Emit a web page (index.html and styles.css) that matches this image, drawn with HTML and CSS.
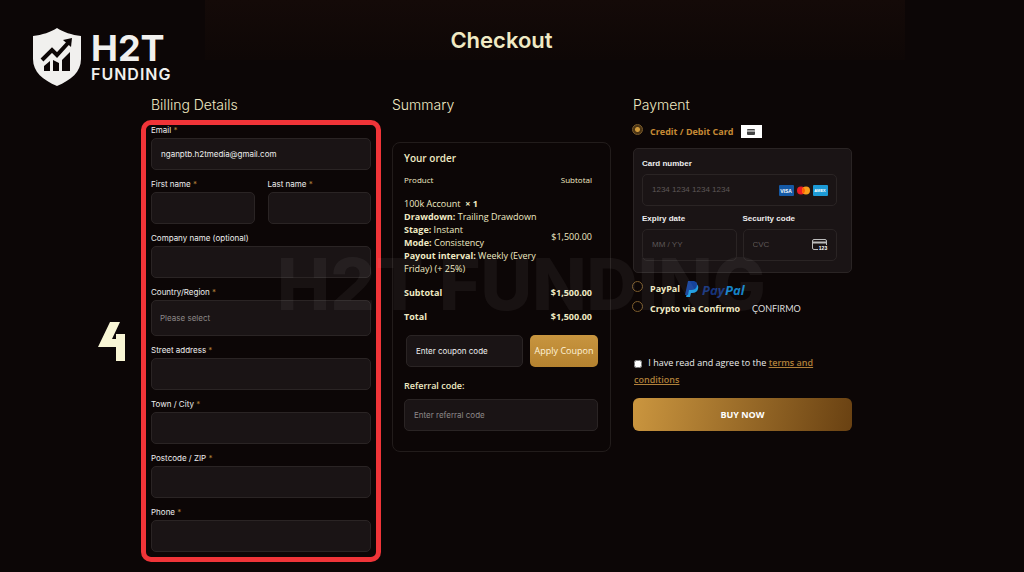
FILE: index.html
```html
<!DOCTYPE html>
<html lang="en">
<head>
    <meta charset="UTF-8">
    <meta name="viewport" content="width=device-width, initial-scale=1.0">
    <title>Checkout - H2T Funding</title>
    <link rel="stylesheet" href="styles.css">
</head>
<body>
    <header class="site-header">
        <a class="logo" href="#" aria-label="H2T Funding">
            <svg class="logo-shield" viewBox="0 0 48 58" aria-hidden="true">
                <path fill="#f1f0ee" d="M24 0 C18 4 9 7 0 8 V31 C0 44 10 52 24 58 C38 52 48 44 48 31 V8 C39 7 30 4 24 0z"/>
                <path fill="none" stroke="#0c0606" stroke-width="4" d="M9 32 L19 22 L24 27 L35 15"/>
                <path fill="#0c0606" d="M30 12 L39 10 L38 19z"/>
                <path fill="#0c0606" d="M11 38 L17 33 V43 H11z M20 32 L26 35 V43 H20z M29 32 L37 24 V43 H29z"/>
            </svg>
            <span class="logo-text">
                <span class="logo-name">H2T</span>
                <span class="logo-sub">FUNDING</span>
            </span>
        </a>
        <h1>Checkout</h1>
    </header>

    <form class="checkout">
        <section class="billing">
            <h2>Billing Details</h2>
            <span class="step">
                <svg viewBox="0 0 28 39" role="img" aria-label="Step 4"><path d="M12 0 H22 L14 17 H18 V12 H27 V39 H18 V25 H0z"/></svg>
            </span>
            <div class="fields">
                <div class="field">
                    <label for="email">Email <span class="required">*</span></label>
                    <input type="email" id="email" value="nganptb.h2tmedia@gmail.com">
                </div>
                <div class="field-row">
                    <div class="field">
                        <label for="first-name">First name <span class="required">*</span></label>
                        <input type="text" id="first-name">
                    </div>
                    <div class="field">
                        <label for="last-name">Last name <span class="required">*</span></label>
                        <input type="text" id="last-name">
                    </div>
                </div>
                <div class="field">
                    <label for="company">Company name (optional)</label>
                    <input type="text" id="company">
                </div>
                <div class="field">
                    <label for="country">Country/Region <span class="required">*</span></label>
                    <select id="country">
                        <option>Please select</option>
                    </select>
                </div>
                <div class="field">
                    <label for="street">Street address <span class="required">*</span></label>
                    <input type="text" id="street">
                </div>
                <div class="field">
                    <label for="city">Town / City <span class="required">*</span></label>
                    <input type="text" id="city">
                </div>
                <div class="field">
                    <label for="postcode">Postcode / ZIP <span class="required">*</span></label>
                    <input type="text" id="postcode">
                </div>
                <div class="field">
                    <label for="phone">Phone <span class="required">*</span></label>
                    <input type="tel" id="phone">
                </div>
            </div>
        </section>

        <section class="summary">
            <h2>Summary</h2>
            <div class="order-card">
                <h3>Your order</h3>
                <table class="order-table">
                    <thead>
                        <tr><th>Product</th><th>Subtotal</th></tr>
                    </thead>
                    <tbody>
                        <tr>
                            <td>
                                100k Account &nbsp;<b>× 1</b><br>
                                <b>Drawdown:</b> Trailing Drawdown<br>
                                <b>Stage:</b> Instant<br>
                                <b>Mode:</b> Consistency<br>
                                <b>Payout interval:</b> Weekly (Every Friday) (+ 25%)
                            </td>
                            <td>$1,500.00</td>
                        </tr>
                    </tbody>
                    <tfoot>
                        <tr><th>Subtotal</th><td>$1,500.00</td></tr>
                        <tr><th>Total</th><td>$1,500.00</td></tr>
                    </tfoot>
                </table>
                <div class="coupon">
                    <input type="text" placeholder="Enter coupon code" aria-label="Coupon code">
                    <button type="button">Apply Coupon</button>
                </div>
                <div class="referral">
                    <label for="referral">Referral code:</label>
                    <input type="text" id="referral" placeholder="Enter referral code">
                </div>
            </div>
        </section>

        <section class="payment">
            <h2>Payment</h2>
            <div class="method method-card">
                <input type="radio" name="method" id="pay-card" checked>
                <label for="pay-card">Credit / Debit Card</label>
                <span class="card-badge">
                    <svg viewBox="0 0 8 6" aria-hidden="true"><rect width="8" height="6" rx="1" fill="#444"/><path d="M0 2h8" stroke="#fff"/></svg>
                </span>
            </div>
            <div class="card-panel">
                <div class="card-field card-number">
                    <label for="card-number">Card number</label>
                    <div class="card-input">
                        <input type="text" id="card-number" placeholder="1234 1234 1234 1234">
                        <svg class="brands" viewBox="0 0 49 11" aria-hidden="true">
                            <rect width="15" height="11" rx="1" fill="#1559a5"/>
                            <text class="brand-name" x="7" y="8" font-size="5">VISA</text>
                            <rect x="17" width="15" height="11" rx="1" fill="#1c1618"/>
                            <circle cx="22" cy="5.5" r="4" fill="#eb1c26"/>
                            <circle cx="27" cy="5.5" r="4" fill="#f79e1b"/>
                            <path d="M24.5 2.400a4 4 0 0 1 0 6.200a4 4 0 0 1 0-6.200z" fill="#ff5f00"/>
                            <rect x="34" width="15" height="11" rx="1" fill="#1c9ad6"/>
                            <text class="brand-name" x="41" y="7" font-size="4">AMEX</text>
                        </svg>
                    </div>
                </div>
                <div class="card-field">
                    <label for="expiry">Expiry date</label>
                    <div class="card-input">
                        <input type="text" id="expiry" placeholder="MM / YY">
                    </div>
                </div>
                <div class="card-field">
                    <label for="cvc">Security code</label>
                    <div class="card-input">
                        <input type="text" id="cvc" placeholder="CVC">
                        <svg class="cvc-icon" viewBox="0 0 16 12" aria-hidden="true">
                            <path d="M6 10.500H2a1.500 1.500 0 0 1-1.500-1.500V2A1.500 1.500 0 0 1 2 .5h11A1.500 1.500 0 0 1 14.500 2v4" fill="none" stroke="#bdbdbd"/>
                            <path d="M0 3.500h15" stroke="#bdbdbd" stroke-width="2"/>
                            <text class="brand-name" x="11" y="11" font-size="5">123</text>
                        </svg>
                    </div>
                </div>
            </div>
            <div class="method">
                <input type="radio" name="method" id="pay-paypal">
                <label for="pay-paypal">PayPal</label>
                <svg class="paypal-logo" viewBox="0 0 62 18" role="img" aria-label="PayPal">
                    <path fill="#1a9be0" d="M5 4h6q3 1 2 5q-1 4-6 4h-1l-1 4H1z"/>
                    <path fill="#15429b" d="M3 1h6q4 1 3 5q-1 4-6 4H4l-1 5H0z"/>
                    <text class="paypal-pay" x="17" y="15">Pay</text>
                    <text class="paypal-pal" x="40" y="15">Pal</text>
                </svg>
            </div>
            <div class="method">
                <input type="radio" name="method" id="pay-crypto">
                <label for="pay-crypto">Crypto via Confirmo</label>
                <span class="confirmo">ÇONFIRMO</span>
            </div>
            <div class="terms">
                <input type="checkbox" id="terms">
                <label for="terms">I have read and agree to the <a href="#">terms and conditions</a></label>
            </div>
            <button class="buy" type="submit">BUY NOW</button>
        </section>
    </form>

    <div class="watermark" aria-hidden="true">H2T FUNDING</div>
</body>
</html>
```
FILE: styles.css
```css
* {
    box-sizing: border-box;
}
body {
    margin: 0;
    position: relative;
    min-height: 100vh;
    background-color: #0c0606;
    color: #f0eac4;
    font-family: "Open Sans", Arial, sans-serif;
    font-size: 8px;
    line-height: 10px;
}
h1, h2, h3 { margin: 0; }
input, select, button {
    font: inherit;
    margin: 0;
}

/* header */
.site-header {
    display: grid;
    grid-template-columns: 1fr auto 1fr;
    align-items: start;
    padding: 28px 21px 0 0;
    background: linear-gradient(#140a08, #0e0706) no-repeat 205px 0 / 700px 60px;
}
.logo {
    display: flex;
    align-items: center;
    gap: 10px;
    padding-left: 33px;
    color: #f1f0ee;
    text-decoration: none;
}
.logo-shield {
    width: 48px;
    height: 58px;
}
.logo-text {
    display: flex;
    flex-direction: column;
    font-family: Inter, sans-serif;
    font-weight: 700;
}
.logo-name {
    font-size: 36px;
    line-height: 34px;
}
.logo-sub {
    font-size: 16px;
    font-weight: 600;
    line-height: 18px;
    letter-spacing: 1px;
}
h1 {
    font-family: Inter, sans-serif;
    font-size: 22px;
    font-weight: 600;
    line-height: 24px;
}

/* columns */
.checkout {
    display: grid;
    grid-template-columns: repeat(3, minmax(0, 1fr));
    gap: 22px;
    padding: 9px 172px 10px 151px;
}
h2 {
    font-family: Inter, sans-serif;
    font-size: 14px;
    font-weight: 300;
    line-height: 20px;
}

/* billing */
.billing { position: relative; }
.fields {
    display: flex;
    flex-direction: column;
    gap: 9px;
    margin: 5px -11px 0 -10px;
    padding: 0 5px 5px;
    border: 5px solid #f03438;
    border-radius: 10px;
    font-family: Inter, sans-serif;
}
.field {
    display: flex;
    flex: 1;
    flex-direction: column;
    gap: 3px;
    min-width: 0;
    color: #eee;
}
.field-row {
    display: flex;
    gap: 13px;
}
.required { color: #b0803a; }
.field input, .field select, .coupon input, .referral input {
    width: 100%;
    height: 32px;
    padding: 0 9px;
    border: 1px solid #2a2424;
    border-radius: 5px;
    background-color: #1a1415;
    color: #eee;
}
.field select {
    height: 36px;
    padding-left: 8px;
    color: #8d8888;
    appearance: none;
}
.step {
    position: absolute;
    top: 227px;
    left: -53px;
}
.step svg {
    width: 28px;
    height: 39px;
    fill: #f8f5d4;
}

/* summary */
.order-card {
    margin-top: 27px;
    padding: 9px 12px 20px 11px;
    border: 1px solid #221c1b;
    border-radius: 8px;
}
h3 {
    font-size: 10px;
    font-weight: 600;
    line-height: 12px;
}
.order-table {
    width: 100%;
    margin: 9px 0 12px;
    padding-right: 6px;
    border-spacing: 0;
    font-size: 9px;
    line-height: 13px;
}
.order-table th, .order-table td {
    padding: 0;
    text-align: left;
}
.order-table th:last-child, .order-table td:last-child { text-align: right; }
.order-table thead th {
    padding-bottom: 11px;
    font-size: 8px;
    font-weight: 400;
}
.order-table tfoot th, .order-table tfoot td {
    padding-top: 11px;
    font-weight: 700;
}
.coupon {
    display: flex;
    gap: 7px;
    padding-left: 2px;
}
.coupon input {
    flex: 1;
    min-width: 0;
}
.coupon input::placeholder { color: #eee; }
.coupon button {
    width: 68px;
    padding: 0;
    border: 0;
    border-radius: 5px;
    background: linear-gradient(#c8953f, #b5822f);
    color: #fff3d8;
    font-size: 9px;
}
.referral {
    display: flex;
    flex-direction: column;
    gap: 8px;
    margin-top: 14px;
}
.referral label {
    font-size: 9px;
    font-weight: 600;
}
.coupon input, .referral input { font-family: Inter, sans-serif; }
.referral input::placeholder { color: #8d8888; }

/* payment */
.method {
    display: flex;
    align-items: center;
    gap: 7px;
    height: 20px;
    font-size: 9px;
    font-weight: 700;
}
.method input {
    appearance: none;
    width: 11px;
    height: 11px;
    margin: 0 0 5px -1px;
    border: 1px solid #7c5c2c;
    border-radius: 50%;
}
.method input:checked {
    background: radial-gradient(#d09a3c 0 2px, #4b3413 3px);
}
.method-card {
    height: 33px;
    color: #c68a35;
}
.card-badge {
    display: flex;
    align-items: center;
    justify-content: center;
    width: 21px;
    height: 13px;
    background-color: #fff;
}
.card-badge svg { width: 8px; }
.card-panel {
    display: grid;
    grid-template-columns: repeat(2, minmax(0, 1fr));
    gap: 8px 6px;
    margin-bottom: 6px;
    padding: 10px 14px 11px 8px;
    border: 1px solid #2a2424;
    border-radius: 5px;
    background-color: #1a1415;
}
.card-field {
    display: flex;
    flex-direction: column;
    gap: 5px;
    color: #eee;
    font-family: "Liberation Sans", Arial, sans-serif;
}
.card-field label { font-weight: 700; }
.card-number { grid-column: 1 / -1; }
.card-input {
    display: flex;
    align-items: center;
    height: 32px;
    padding: 0 8px 0 9px;
    border: 1px solid #2a2424;
    border-radius: 5px;
}
.card-input input {
    flex: 1;
    width: 100%;
    min-width: 0;
    padding: 0;
    border: 0;
    background: none;
    color: #eee;
}
.card-input input::placeholder { color: #5e5858; }
.card-input svg { flex-shrink: 0; }
.brands {
    width: 49px;
    height: 11px;
}
.brand-name {
    fill: #fff;
    font-weight: 700;
    text-anchor: middle;
}
.cvc-icon {
    width: 16px;
    height: 12px;
}
.paypal-logo {
    width: 62px;
    height: 18px;
    margin-left: -2px;
    font-family: "Open Sans", sans-serif;
    font-size: 13px;
    font-style: italic;
    font-weight: 700;
}
.paypal-pay { fill: #15337c; }
.paypal-pal { fill: #1583c8; }
.confirmo {
    padding-left: 5px;
    color: #ddd;
    font-family: Lato, sans-serif;
    font-size: 9px;
    font-weight: 400;
}
.terms {
    margin-top: 35px;
    padding-left: 1px;
    color: #eee;
    font-size: 9px;
    line-height: 17px;
}
.terms input {
    width: 8px;
    height: 8px;
    margin-right: 4px;
    vertical-align: middle;
}
.terms a {
    color: #b0803a;
    font-weight: 600;
}
.buy {
    width: 100%;
    height: 33px;
    margin-top: 10px;
    border: 0;
    border-radius: 6px;
    background: linear-gradient(100deg, #cb963f, #694112);
    color: #fff;
    font-size: 9px;
    font-weight: 700;
}

.watermark {
    position: absolute;
    top: 249px;
    left: 277px;
    color: rgba(255, 255, 255, 0.05);
    font-family: Inter, sans-serif;
    font-size: 71px;
    font-weight: 800;
    line-height: 70px;
    white-space: nowrap;
    pointer-events: none;
}
```
